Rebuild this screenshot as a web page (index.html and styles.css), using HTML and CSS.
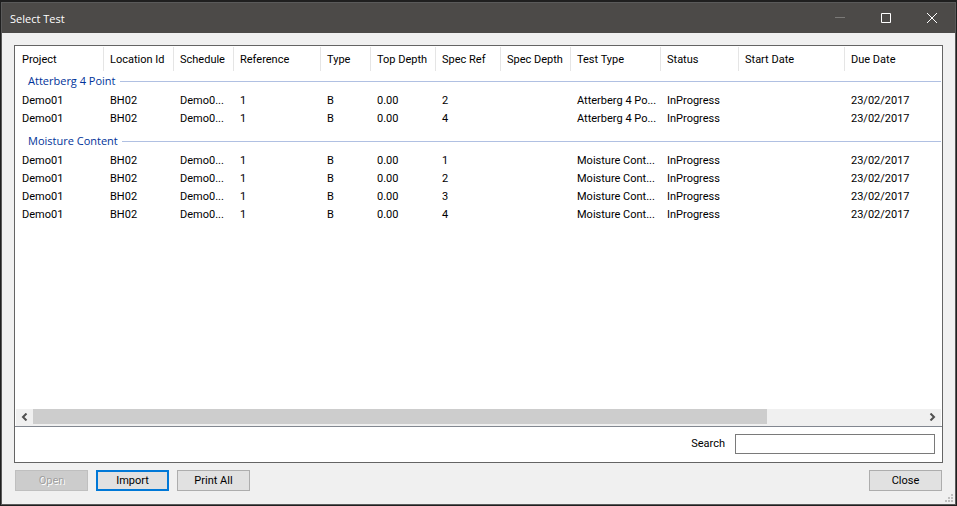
FILE: index.html
```html
<!DOCTYPE html>
<html lang="en">
<head>
  <meta charset="UTF-8">
  <meta name="viewport" content="width=device-width, initial-scale=1.0">
  <title>Select Test</title>
  <link rel="stylesheet" href="styles.css">
</head>
<body>

  <div class="window">
    <header class="titlebar">
      <h1>Select Test</h1>
      <button class="caption minimize" aria-label="Minimize" disabled>
        <svg width="10" height="10" viewBox="0 0 10 10"><path d="M0 4.5h10"/></svg>
      </button>
      <button class="caption" aria-label="Maximize">
        <svg width="10" height="10" viewBox="0 0 10 10"><path d="M.5.5h9v9h-9z"/></svg>
      </button>
      <button class="caption" aria-label="Close window">
        <svg width="10" height="10" viewBox="0 0 10 10"><path d="M0 0l10 10M10 0L0 10"/></svg>
      </button>
    </header>

    <main class="content">
      <div class="panel">
        <div class="list">
          <table class="tests">
            <colgroup>
              <col class="w-project">
              <col class="w-location">
              <col class="w-schedule">
              <col class="w-reference">
              <col class="w-type">
              <col class="w-depth">
              <col class="w-depth">
              <col class="w-specdepth">
              <col class="w-testtype">
              <col class="w-status">
              <col class="w-start">
              <col>
            </colgroup>
            <thead>
              <tr>
                <th>Project</th>
                <th>Location Id</th>
                <th>Schedule</th>
                <th>Reference</th>
                <th>Type</th>
                <th>Top Depth</th>
                <th>Spec Ref</th>
                <th>Spec Depth</th>
                <th>Test Type</th>
                <th>Status</th>
                <th>Start Date</th>
                <th>Due Date</th>
              </tr>
            </thead>
            <tbody>
              <tr class="group">
                <th colspan="12"><div class="group-title">Atterberg 4 Point</div></th>
              </tr>
              <tr><td>Demo01</td><td>BH02</td><td>Demo0...</td><td>1</td><td>B</td><td>0.00</td><td>2</td><td></td><td>Atterberg 4 Po...</td><td>InProgress</td><td></td><td>23/02/2017</td></tr>
              <tr><td>Demo01</td><td>BH02</td><td>Demo0...</td><td>1</td><td>B</td><td>0.00</td><td>4</td><td></td><td>Atterberg 4 Po...</td><td>InProgress</td><td></td><td>23/02/2017</td></tr>
            </tbody>
            <tbody>
              <tr class="group next">
                <th colspan="12"><div class="group-title">Moisture Content</div></th>
              </tr>
              <tr><td>Demo01</td><td>BH02</td><td>Demo0...</td><td>1</td><td>B</td><td>0.00</td><td>1</td><td></td><td>Moisture Cont...</td><td>InProgress</td><td></td><td>23/02/2017</td></tr>
              <tr><td>Demo01</td><td>BH02</td><td>Demo0...</td><td>1</td><td>B</td><td>0.00</td><td>2</td><td></td><td>Moisture Cont...</td><td>InProgress</td><td></td><td>23/02/2017</td></tr>
              <tr><td>Demo01</td><td>BH02</td><td>Demo0...</td><td>1</td><td>B</td><td>0.00</td><td>3</td><td></td><td>Moisture Cont...</td><td>InProgress</td><td></td><td>23/02/2017</td></tr>
              <tr><td>Demo01</td><td>BH02</td><td>Demo0...</td><td>1</td><td>B</td><td>0.00</td><td>4</td><td></td><td>Moisture Cont...</td><td>InProgress</td><td></td><td>23/02/2017</td></tr>
            </tbody>
          </table>
        </div>

        <div class="scrollbar">
          <button class="arrow" aria-label="Scroll left">
            <svg width="7" height="8" viewBox="0 0 7 8"><path d="M5.5.5L2 4l3.5 3.5"/></svg>
          </button>
          <div class="track"><div class="thumb"></div></div>
          <button class="arrow" aria-label="Scroll right">
            <svg width="7" height="8" viewBox="0 0 7 8"><path d="M1.5.5L5 4 1.5 7.5"/></svg>
          </button>
        </div>

        <div class="search">
          <label for="search">Search</label>
          <input type="text" id="search">
        </div>
      </div>

      <div class="actions">
        <button class="button" disabled>Open</button>
        <button class="button default">Import</button>
        <button class="button">Print All</button>
        <button class="button close">Close</button>
      </div>
    </main>

    <svg class="grip" width="8" height="8" viewBox="0 0 8 8">
      <path d="M6 0h2v2H6zM3 3h2v2H3zM6 3h2v2H6zM0 6h2v2H0zM3 6h2v2H3zM6 6h2v2H6z"/>
    </svg>
  </div>

</body>
</html>
```
FILE: styles.css
```css
* {
  box-sizing: border-box;
}

body {
  display: flex;
  flex-direction: column;
  min-height: 100vh;
  margin: 0;
  padding: 2px 1px 1px;
  background-color: #1f1f1f;
  font-family: Roboto, "Liberation Sans", sans-serif;
  font-size: 11px;
  color: #000;
}

button,
input {
  font: inherit;
  color: inherit;
}

.window {
  position: relative;
  flex: 1;
  display: flex;
  flex-direction: column;
  border: 1px solid #5a5a5a;
  background-color: #f0f0f0;
}

.titlebar {
  display: flex;
  align-items: center;
  height: 30px;
  padding-left: 8px;
  background-color: #4c4a48;
  color: #fff;
}

.titlebar h1 {
  flex: 1;
  margin: 0;
  font-family: "Open Sans", "Noto Sans", sans-serif;
  font-size: 11px;
  font-weight: normal;
}

.caption {
  display: flex;
  align-items: center;
  justify-content: center;
  width: 46px;
  height: 28px;
  padding: 0;
  border: none;
  background: none;
}

.caption svg {
  fill: none;
  stroke: #fff;
}

.caption.minimize svg {
  stroke: #7b7a78;
}

.content {
  flex: 1;
  display: flex;
  flex-direction: column;
  padding: 12px 12px 13px;
}

.panel {
  flex: 1;
  display: flex;
  flex-direction: column;
  border: 1px solid #646464;
  background-color: #fff;
}

.list {
  flex: 1;
  padding: 1px 1px 0;
  overflow: hidden;
}

/* test list */
.tests {
  width: 100%;
  table-layout: fixed;
  border-spacing: 0;
}

.w-project { width: 88px; }
.w-location { width: 70px; }
.w-schedule { width: 60px; }
.w-reference { width: 87px; }
.w-type { width: 50px; }
.w-depth { width: 65px; }
.w-specdepth { width: 70px; }
.w-testtype { width: 90px; }
.w-status { width: 78px; }
.w-start { width: 106px; }

.tests th,
.tests td {
  padding: 0 0 0 6px;
  font-weight: normal;
  text-align: left;
  white-space: nowrap;
}

.tests thead th {
  height: 24px;
  border-right: 1px solid #e5e5e5;
}

.tests thead th:last-child {
  border-right: none;
}

.tests td {
  height: 18px;
  line-height: 18px;
}

.tests .group th {
  padding: 0 0 1px 12px;
}

.tests .next th {
  padding-top: 3px;
}

.group-title {
  display: flex;
  align-items: center;
  gap: 4px;
  height: 20px;
  font-family: "Open Sans", "Noto Sans", sans-serif;
  font-size: 11px;
  line-height: 20px;
  color: #003399;
}

.group-title::after {
  content: "";
  flex: 1;
  height: 1px;
  background-color: #b0c0e2;
}

/* horizontal scrollbar */
.scrollbar {
  display: flex;
  height: 17px;
  margin: 0 1px;
  background-color: #f0f0f0;
}

.arrow {
  display: flex;
  align-items: center;
  justify-content: center;
  width: 17px;
  height: 15px;
  padding: 0;
  border: none;
  background: none;
}

.arrow svg {
  fill: none;
  stroke: #505050;
  stroke-width: 2;
}

.track {
  flex: 1;
}

.thumb {
  width: calc(100% * 14 / 17);
  height: 15px;
  background-color: #cdcdcd;
}

.search {
  display: flex;
  align-items: center;
  justify-content: flex-end;
  gap: 10px;
  height: 36px;
  padding: 0 7px 2px 0;
  border-top: 1px solid #828790;
}

.search input {
  width: 200px;
  height: 20px;
  padding: 0 4px;
  border: 1px solid #7a7a7a;
  background-color: #fff;
}

.actions {
  display: flex;
  gap: 8px;
  padding: 7px 1px 0;
}

.button {
  width: 73px;
  height: 21px;
  padding: 0;
  border: 1px solid #adadad;
  background-color: #e1e1e1;
}

.button:disabled {
  border-color: #bfbfbf;
  background-color: #cccccc;
  color: #a0a0a0;
  text-shadow: 1px 1px #fff;
}

.button.default {
  border: 2px solid #0078d7;
}

.button.close {
  margin-left: auto;
}

/* resize corner */
.grip {
  position: absolute;
  right: 2px;
  bottom: 2px;
  fill: #bfbfbf;
}
```
